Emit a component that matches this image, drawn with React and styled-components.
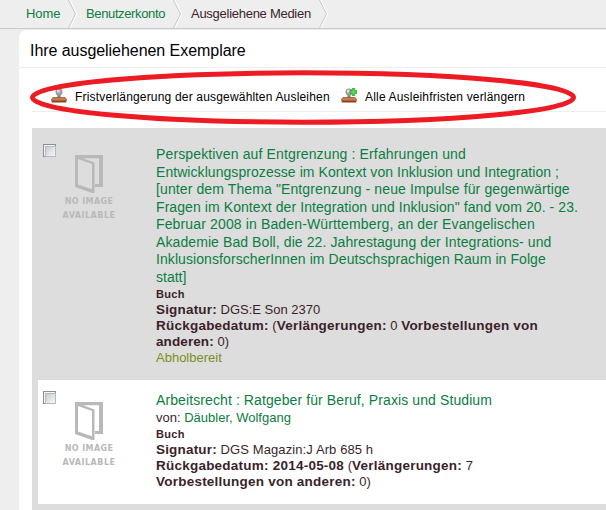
import React from "react";
import styled, { createGlobalStyle } from "styled-components";

const Global = createGlobalStyle`
  * { box-sizing: border-box; }
  body { margin: 0; background: #eee; font-family: "Liberation Sans", Arial, sans-serif; color: #3b1f2b; overflow: hidden; }
`;
const Page = styled.div`width: 606px; height: 510px; overflow: hidden; background: #eee;`;
const Crumbs = styled.nav`
  display: flex; height: 29px; border-bottom: 1px solid #c8c8c8; padding-left: 26px;
  font-size: 13px; line-height: 28px; overflow: hidden;
`;
const Crumb = styled.span`
  flex: none; width: ${p => p.$w}px; letter-spacing: ${p => p.$ls || 0}px;
  color: ${p => (p.$current ? "#3b1f2b" : "#0b7d43")}; white-space: nowrap;
`;
const Chevron = styled.svg`flex: none; width: 9px; height: 28px; margin-right: ${p => p.$gap}px;`;
const Panel = styled.main`
  position: relative; margin: 1px 0 0 19px; height: 480px; background: #fff; border-top-left-radius: 8px;
`;
const Heading = styled.h1`
  margin: 0; height: 38px; padding-left: 11px; border-bottom: 1px solid #eee;
  font-weight: 400; font-size: 16px; line-height: 42px; color: #000; letter-spacing: -0.05px;
`;
const Toolbar = styled.div`
  display: flex; align-items: center; height: 44px; margin-left: 13px; padding: 15px 0 0 19px;
  border-bottom: 1px solid #eee; font-size: 12px; color: #000;
`;
const Action = styled.span`
  display: flex; align-items: center; height: 20px; width: ${p => p.$w}px; white-space: nowrap;
  letter-spacing: 0.18px;
`;
const StampSvg = styled.svg`flex: none; width: 16px; height: 16px; margin: -2px 8px 0 0;`;
const Marker = styled.svg`position: absolute; left: 9px; top: 38px; width: 552px; height: 60px; pointer-events: none;`;
const List = styled.div`margin: 16px 0 0 13px; height: 382px; background: #ddd; padding-left: 6px;`;
const Item = styled.article`
  display: flex; height: ${p => p.$h}px; background: ${p => p.$bg}; padding: ${p => p.$pt}px 0 0 5px;
`;
const Check = styled.span`
  flex: none; width: 13px; height: 13px; border: 1px solid #8e8f8f; padding: 1px; background: #f4f4f4;
  &::before { content: ""; display: block; width: 9px; height: 9px; border: 1px solid #b8bcc2;
    background: linear-gradient(135deg, #c8cdd5, #f8f8f8); }
`;
const Cover = styled.div`
  flex: none; width: 66px; margin: 11px 0 0 0; color: #b9b9b9; text-align: center;
  font: 700 8px/14px "DejaVu Sans", sans-serif; white-space: nowrap;
  svg { display: block; margin: 0 auto 2px 19px; }
`;
const CoverText = styled.div`letter-spacing: ${p => p.$ls}px;`;
const Body = styled.div`margin-left: 34px; padding-top: ${p => p.$pt}px;`;
const Title = styled.div`
  font-size: 14px; line-height: 17.55px; height: 17.55px; color: #0b7d43; white-space: nowrap;
  letter-spacing: ${p => p.$ls || 0}px;
`;
const Meta = styled.div`
  font-size: ${p => p.$size || 13}px; line-height: 16px; height: 16px; white-space: nowrap;
  letter-spacing: ${p => p.$ls || 0}px; color: ${p => p.$color || "#3b1f2b"};
  b { font-size: ${p => p.$size || 13.5}px; letter-spacing: ${p => p.$bold || 0.23}px; line-height: 1; }
`;
const Author = styled.span`color: #0b7d43;`;

const Separator = ({ gap }) => (
  <Chevron $gap={gap} viewBox="0 0 9 28">
    <path d="M1.5 0 L8.5 14 L1.5 28" fill="none" stroke="#fff" strokeWidth="1.5" />
    <path d="M.5 0 L7.5 14 L.5 28" fill="none" stroke="#c6c6c6" />
  </Chevron>
);
const Stamp = ({ plus }) => (
  <StampSvg viewBox="0 0 16 16">
    <path d="M6.7 5h2.6l.6 5H6.1z" fill="#8d8d8d" />
    <circle cx="8" cy="4" r="3.2" fill="#a5a5a5" stroke="#858585" strokeWidth=".6" />
    <circle cx="7.3" cy="3.1" r="1.5" fill="#e2e2e2" />
    <path d="M2 9.5h12l1.3 1.5v2H.7v-2z" fill="#c47d4e" stroke="#925026" strokeWidth=".7" />
    <path d="M.7 12.8h14.6v1.7H.7z" fill="#87451f" />
    {plus && <path d="M11.2 .5h2.6v2.2H16v2.6h-2.2v2.2h-2.6V5.3H9V2.7h2.2z" fill="#55d557" stroke="#20a32c" strokeWidth=".8" />}
  </StampSvg>
);
const NoImage = () => (
  <Cover>
    <svg width="28" height="38" viewBox="0 0 28 38">
      <path d="M0 0H28V32H19V29H24V3.3H8L19.5 7.5V38H17L0 32ZM3 4V29.5L17 34.3V9Z" fill="#b9b9b9" fillRule="evenodd" />
    </svg>
    <CoverText $ls={0.4}>NO IMAGE</CoverText>
    <CoverText $ls={0.5}>AVAILABLE</CoverText>
  </Cover>
);

export default function App() {
  return (
    <Page>
      <Global />
      <Crumbs>
        <Crumb $w={42} $ls={-0.1}>Home</Crumb><Separator gap={9} />
        <Crumb $w={87} $ls={-0.37}>Benutzerkonto</Crumb><Separator gap={9} />
        <Crumb $w={128} $ls={-0.27} $current>Ausgeliehene Medien</Crumb><Separator gap={0} />
      </Crumbs>
      <Panel>
        <Heading>Ihre ausgeliehenen Exemplare</Heading>
        <Toolbar>
          <Action $w={290}><Stamp />Fristverlängerung der ausgewählten Ausleihen</Action>
          <Action $w={200}><Stamp plus />Alle Ausleihfristen verlängern</Action>
        </Toolbar>
        <Marker viewBox="0 0 552 60">
          <ellipse cx="275" cy="29.5" rx="270.5" ry="24.7" fill="none" stroke="#ed1c24" strokeWidth="5" />
        </Marker>
        <List>
          <Item $h={252} $bg="#ddd" $pt={16}>
            <Check />
            <NoImage />
            <Body $pt={2}>
              <Title $ls={0.14}>Perspektiven auf Entgrenzung : Erfahrungen und</Title>
              <Title $ls={0.06}>Entwicklungsprozesse im Kontext von Inklusion und Integration ;</Title>
              <Title $ls={0.11}>[unter dem Thema "Entgrenzung - neue Impulse für gegenwärtige</Title>
              <Title $ls={0.08}>Fragen im Kontext der Integration und Inklusion" fand vom 20. - 23.</Title>
              <Title $ls={0.14}>Februar 2008 in Baden-Württemberg, an der Evangelischen</Title>
              <Title $ls={0.09}>Akademie Bad Boll, die 22. Jahrestagung der Integrations- und</Title>
              <Title $ls={0.08}>InklusionsforscherInnen im Deutschsprachigen Raum in Folge</Title>
              <Title>statt]</Title>
              <Meta $size={11} $bold={0.3}><b>Buch</b></Meta>
              <Meta $bold={0.18}><b>Signatur:</b> DGS:E Son 2370</Meta>
              <Meta><b>Rückgabedatum:</b> (<b>Verlängerungen:</b> 0 <b>Vorbestellungen von</b></Meta>
              <Meta $bold={0.1}><b>anderen:</b> 0)</Meta>
              <Meta $color="#7a8f1f">Abholbereit</Meta>
            </Body>
          </Item>
          <Item $h={124} $bg="#fff" $pt={11}>
            <Check />
            <NoImage />
            <Body $pt={1}>
              <Title $ls={0.1}>Arbeitsrecht : Ratgeber für Beruf, Praxis und Studium</Title>
              <Meta>von: <Author>Däubler, Wolfgang</Author></Meta>
              <Meta $size={11} $bold={0.3}><b>Buch</b></Meta>
              <Meta $bold={0.18} $ls={0.1}><b>Signatur:</b> DGS Magazin:J Arb 685 h</Meta>
              <Meta><b>Rückgabedatum: 2014-05-08</b> (<b>Verlängerungen:</b> 7</Meta>
              <Meta><b>Vorbestellungen von anderen:</b> 0)</Meta>
            </Body>
          </Item>
        </List>
      </Panel>
    </Page>
  );
}
